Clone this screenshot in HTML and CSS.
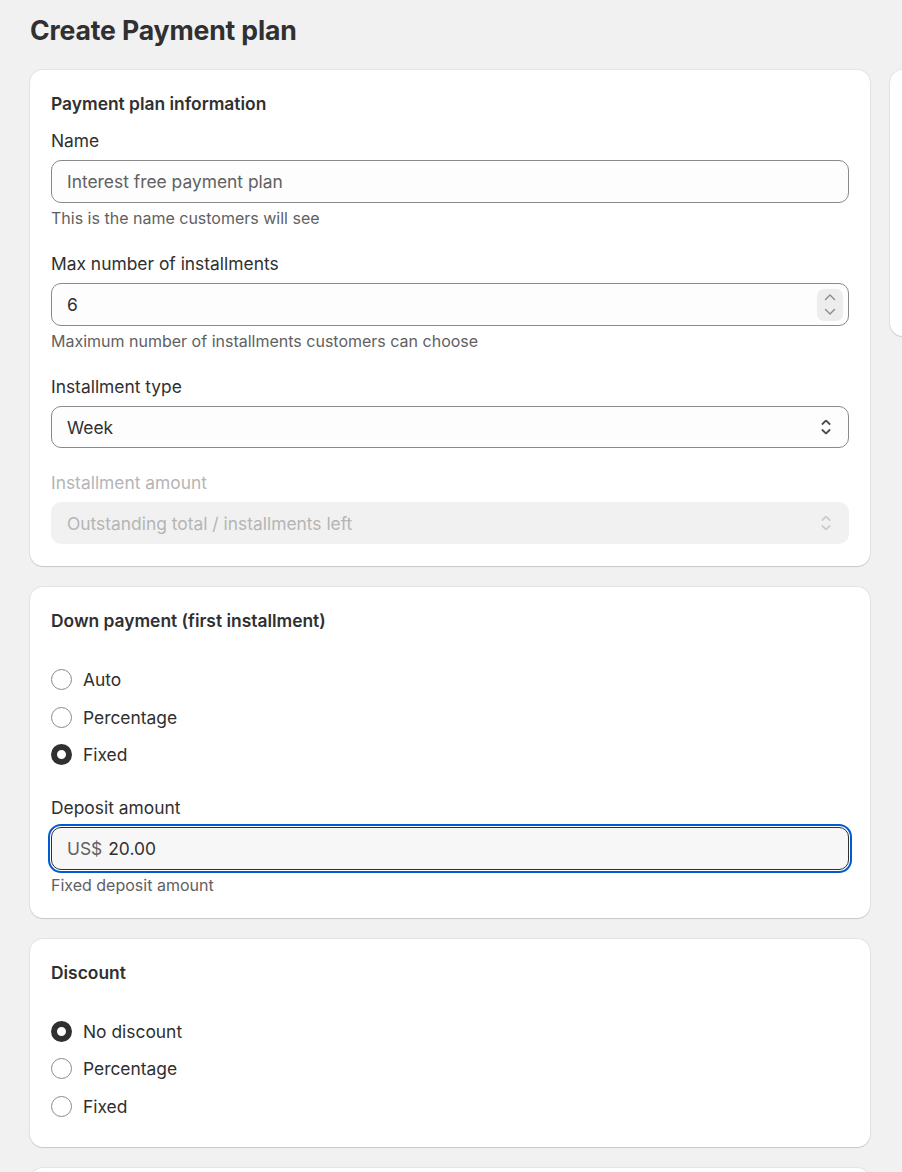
FILE: index.html
```html
<!DOCTYPE html>
<html lang="en">
<head>
<meta charset="utf-8">
<title>Create Payment plan</title>
<link rel="stylesheet" href="styles.css">
</head>
<body>
<div class="page">
  <h1 class="page-title">Create Payment plan</h1>
  <div class="layout">
    <main class="main">
      <section class="card">
        <h2 class="card-title">Payment plan information</h2>
        <div class="field first">
          <label class="label">Name</label>
          <div class="input"><span class="placeholder">Interest free payment plan</span></div>
          <p class="help">This is the name customers will see</p>
        </div>
        <div class="field">
          <label class="label">Max number of installments</label>
          <div class="input">
            <span class="value">6</span>
            <span class="stepper">
              <svg viewBox="0 0 12 8" width="12" height="8"><path d="M1.5 6.5 6 2l4.5 4.5" fill="none" stroke="#8a8a8a" stroke-width="1.4" stroke-linecap="round" stroke-linejoin="round"/></svg>
              <svg viewBox="0 0 12 8" width="12" height="8"><path d="M1.5 1.5 6 6l4.5-4.5" fill="none" stroke="#8a8a8a" stroke-width="1.4" stroke-linecap="round" stroke-linejoin="round"/></svg>
            </span>
          </div>
          <p class="help">Maximum number of installments customers can choose</p>
        </div>
        <div class="field">
          <label class="label">Installment type</label>
          <div class="input select">
            <span class="value">Week</span>
            <svg class="sel-icon" viewBox="0 0 20 20" width="24" height="24"><path fill="#4a4a4a" d="M10.884 4.323a1.25 1.25 0 0 0-1.768 0l-2.646 2.647a.75.75 0 0 0 1.06 1.06l2.47-2.47 2.47 2.470a.75.75 0 1 0 1.060-1.06l-2.646-2.647Z"/><path fill="#4a4a4a" d="m13.53 13.03-2.646 2.647a1.25 1.25 0 0 1-1.768 0l-2.646-2.647a.75.75 0 0 1 1.06-1.06l2.47 2.47 2.47-2.470a.75.75 0 0 1 1.06 1.060Z"/></svg>
          </div>
        </div>
        <div class="field disabled">
          <label class="label">Installment amount</label>
          <div class="input select">
            <span class="value">Outstanding total / installments left</span>
            <svg class="sel-icon" viewBox="0 0 20 20" width="24" height="24"><path fill="#cccccc" d="M10.884 4.323a1.25 1.25 0 0 0-1.768 0l-2.646 2.647a.75.75 0 0 0 1.06 1.06l2.47-2.47 2.47 2.470a.75.75 0 1 0 1.060-1.06l-2.646-2.647Z"/><path fill="#cccccc" d="m13.53 13.03-2.646 2.647a1.25 1.25 0 0 1-1.768 0l-2.646-2.647a.75.75 0 0 1 1.06-1.06l2.47 2.47 2.470-2.47a.75.75 0 0 1 1.06 1.060Z"/></svg>
          </div>
        </div>
      </section>

      <section class="card">
        <h2 class="card-title">Down payment (first installment)</h2>
        <ul class="choices">
          <li class="choice"><span class="radio"></span>Auto</li>
          <li class="choice"><span class="radio"></span>Percentage</li>
          <li class="choice"><span class="radio checked"></span>Fixed</li>
        </ul>
        <div class="field after-choices">
          <label class="label">Deposit amount</label>
          <div class="input focused"><span class="prefix">US$</span><span class="value">20.00</span></div>
          <p class="help">Fixed deposit amount</p>
        </div>
      </section>

      <section class="card">
        <h2 class="card-title">Discount</h2>
        <ul class="choices">
          <li class="choice"><span class="radio checked"></span>No discount</li>
          <li class="choice"><span class="radio"></span>Percentage</li>
          <li class="choice"><span class="radio"></span>Fixed</li>
        </ul>
      </section>

      <section class="card card-tail"></section>
    </main>
    <aside class="side">
      <section class="card side-card"></section>
    </aside>
  </div>
</div>
</body>
</html>
```

FILE: styles.css
```css
html, body {
  margin: 0;
  padding: 0;
  overflow: hidden;
  background: #f1f1f1;
}

body {
  font-family: Inter, "Noto Sans", "Liberation Sans", sans-serif;
  color: #303030;
  -webkit-font-smoothing: antialiased;
}

.page {
  padding: 12px 0 0 30px;
}

.page-title {
  margin: 0 0 22px;
  font-size: 26.6px;
  line-height: 36px;
  font-weight: 700;
  letter-spacing: -0.15px;
  color: #303030;
}

.layout {
  display: flex;
  gap: 20px;
  align-items: flex-start;
}

.main {
  flex: none;
  width: 840px;
  display: flex;
  flex-direction: column;
  gap: 21px;
}

.side {
  flex: none;
  width: 300px;
}

.card {
  background: #ffffff;
  border-radius: 13px;
  padding: 22px 21px;
  box-shadow: 0 1px 1px rgba(0, 0, 0, 0.12), 0 0 0 1px rgba(0, 0, 0, 0.05);
}

.side-card {
  height: 266px;
  box-sizing: border-box;
}

.card-tail {
  height: 120px;
}

.card-title {
  margin: 0;
  font-size: 17.4px;
  line-height: 24px;
  font-weight: 600;
}

.field {
  margin-top: 23px;
}

.field.first {
  margin-top: 13px;
}

.label {
  display: block;
  font-size: 17.4px;
  line-height: 24px;
  margin-bottom: 7px;
}

.input {
  box-sizing: border-box;
  height: 43px;
  border: 1px solid #8a8a8a;
  border-radius: 10px;
  background: #fdfdfd;
  display: flex;
  align-items: center;
  padding: 0 5px 0 15px;
  font-size: 17.4px;
}

.input .value {
  flex: 1;
  color: #303030;
}

.placeholder {
  color: #616161;
}

.help {
  margin: 5px 0 0;
  font-size: 16px;
  line-height: 21px;
  color: #616161;
}

.stepper {
  width: 26px;
  height: 32px;
  border-radius: 7px;
  background: #ededed;
  display: flex;
  flex-direction: column;
  align-items: center;
  justify-content: center;
  gap: 7px;
}

.stepper svg {
  display: block;
}

.select {
  height: 42px;
  padding-right: 10px;
}

.sel-icon {
  display: block;
  flex: none;
}

.disabled .label {
  color: #b5b5b5;
}

.disabled .input {
  border-color: transparent;
  background: #f1f1f1;
}

.disabled .input .value {
  color: #b5b5b5;
}

.choices {
  list-style: none;
  margin: 28px 0 0;
  padding: 0;
}

.choice {
  height: 37.5px;
  display: flex;
  align-items: center;
  gap: 11px;
  font-size: 17.4px;
}

.radio {
  box-sizing: border-box;
  width: 21px;
  height: 21px;
  border-radius: 50%;
  border: 1px solid #8a8a8a;
  background: #ffffff;
  flex: none;
}

.radio.checked {
  border: 6.5px solid #303030;
}

.field.after-choices {
  margin-top: 22px;
}

.input.focused {
  height: 43px;
  border: 1.5px solid #303030;
  background: #f7f7f7;
  outline: 2px solid #005bd3;
  outline-offset: 1px;
}

.prefix {
  color: #616161;
  margin-right: 6px;
}
```
